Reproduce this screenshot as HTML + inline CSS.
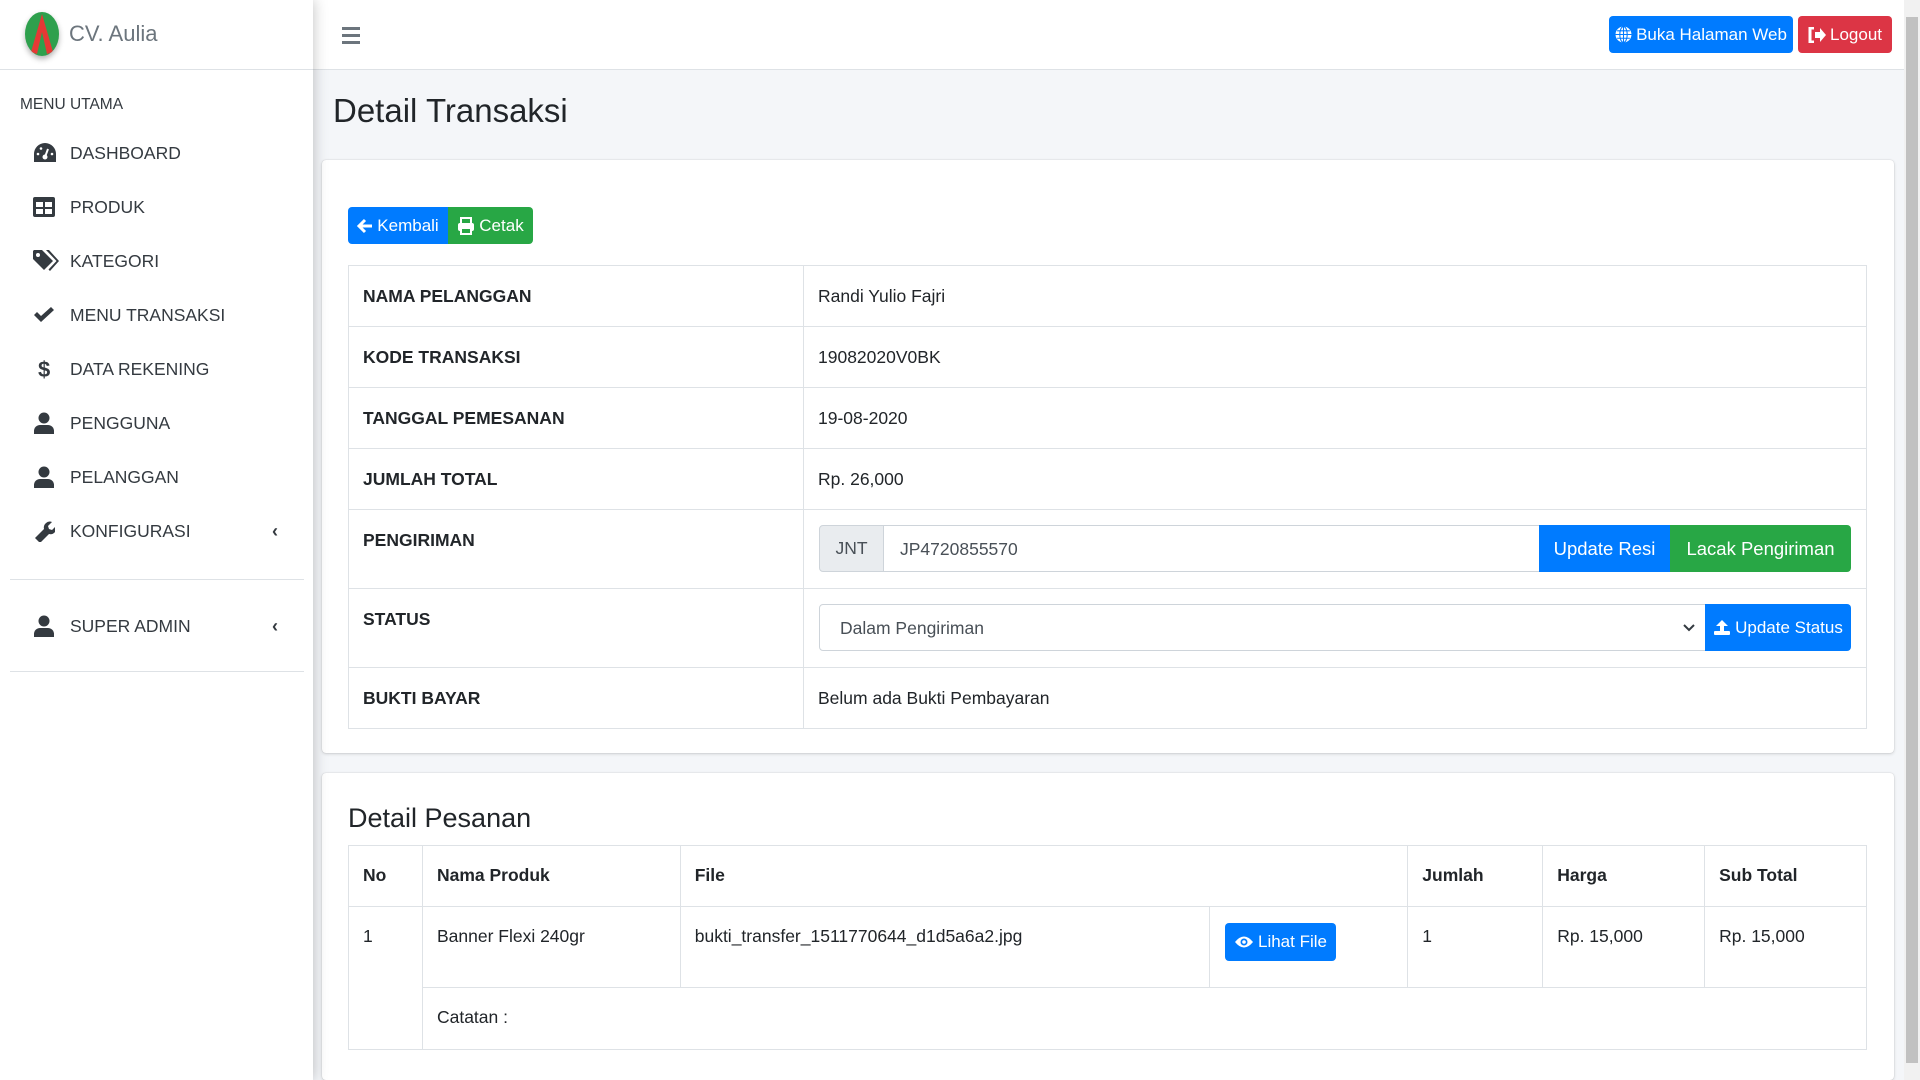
<!DOCTYPE html>
<html style="overflow:hidden;width:1920px;height:1080px"><head><meta charset="utf-8"><style>
*{box-sizing:border-box;margin:0;padding:0}
body{width:1920px;height:1080px;overflow:hidden;background:#f4f6f9;font-family:"Liberation Sans",sans-serif;color:#212529;position:relative}
.abs{position:absolute}
.sb{left:0;top:0;width:313px;height:1080px;background:#fff;box-shadow:0 0 14px rgba(0,0,0,.25);z-index:2}
.hdr{left:313px;top:0;width:1591px;height:70px;background:#fff;border-bottom:1px solid #dee2e6}
.mi{position:absolute;left:0;width:313px;font-size:17.5px;color:#343a40;display:flex;align-items:center}
.mi svg{position:absolute;left:33px}
.mi span{position:absolute;left:70px}
.chev{position:absolute;left:272px;font-weight:bold;font-size:18px}
.btn{position:absolute;color:#fff;font-size:17px;display:flex;align-items:center;justify-content:center;gap:4px;border-radius:4px}
.card{background:#fff;border-radius:4px;box-shadow:0 0 1px rgba(0,0,0,.2),0 1px 3px rgba(0,0,0,.15)}
table{border-collapse:collapse;position:absolute}
td,th{border:1px solid #dee2e6;font-size:17.5px;vertical-align:top;text-align:left}
.t1 td{padding:20px 14px 0}
.t1 td:first-child{font-weight:bold;width:455px}
.t2 th,.t2 td{padding:19px 14px 0}
</style></head><body>
<div class="abs sb">
 <div class="abs" style="left:25px;top:12px;width:34px;height:44px;border-radius:50%;background:#2ea04d;overflow:hidden;box-shadow:0 3px 6px rgba(0,0,0,.3)">
  <svg width="34" height="44"><path d="M17 2 L6 40 L12 42 L17 20 L22 42 L28 40 Z" fill="#e53935"/></svg>
 </div>
 <div class="abs" style="left:69px;top:21px;font-size:22px;color:#6c757d;font-weight:300">CV. Aulia</div>
 <div class="abs" style="left:0;top:69px;width:313px;border-top:1px solid #dee2e6"></div>
 <div class="abs" style="left:20px;top:96px;font-size:15.5px;color:#343a40">MENU UTAMA</div>
 <div class="mi" style="top:141px;height:24px"><svg width="24" height="22" viewBox="0 0 24 22"><path d="M12 1A11 11 0 0 0 1 12v8h22v-8A11 11 0 0 0 12 1z" fill="#343a40"/><circle cx="12" cy="15" r="2.5" fill="#fff"/><path d="M12 15 L15 7" stroke="#fff" stroke-width="2"/><circle cx="5" cy="12" r="1.3" fill="#fff"/><circle cx="8" cy="6.5" r="1.3" fill="#fff"/><circle cx="19" cy="12" r="1.3" fill="#fff"/></svg><span>DASHBOARD</span></div>
 <div class="mi" style="top:195px;height:24px"><svg width="22" height="20" viewBox="0 0 22 20"><rect x="0" y="0" width="22" height="20" rx="2" fill="#343a40"/><rect x="3" y="5" width="7" height="5" fill="#fff"/><rect x="12" y="5" width="7" height="5" fill="#fff"/><rect x="3" y="12" width="7" height="5" fill="#fff"/><rect x="12" y="12" width="7" height="5" fill="#fff"/></svg><span>PRODUK</span></div>
 <div class="mi" style="top:249px;height:24px"><svg width="26" height="24" viewBox="0 0 26 24"><path d="M0 2v8l11 11 9-9L9 1H1z" fill="#343a40"/><path d="M13 1h3l10 11-9 10-1.5-1.5 8-8.5z" fill="#343a40"/><circle cx="5" cy="6" r="2" fill="#fff"/></svg><span>KATEGORI</span></div>
 <div class="mi" style="top:303px;height:24px"><svg width="22" height="18" viewBox="0 0 22 18"><path d="M1 9l3-3 4 4L18 1l3 3L8 16z" fill="#343a40"/></svg><span>MENU TRANSAKSI</span></div>
 <div class="mi" style="top:357px;height:24px"><svg width="22" height="24" viewBox="0 0 22 24"><text x="5" y="20" font-size="22" font-weight="bold" fill="#343a40" font-family="Liberation Sans">$</text></svg><span>DATA REKENING</span></div>
 <div class="mi" style="top:411px;height:24px"><svg width="22" height="22" viewBox="0 0 22 22"><circle cx="11" cy="6" r="5.5" fill="#343a40"/><path d="M1 22v-3a6 6 0 0 1 6-6h8a6 6 0 0 1 6 6v3z" fill="#343a40"/></svg><span>PENGGUNA</span></div>
 <div class="mi" style="top:465px;height:24px"><svg width="22" height="22" viewBox="0 0 22 22"><circle cx="11" cy="6" r="5.5" fill="#343a40"/><path d="M1 22v-3a6 6 0 0 1 6-6h8a6 6 0 0 1 6 6v3z" fill="#343a40"/></svg><span>PELANGGAN</span></div>
 <div class="mi" style="top:519px;height:24px"><svg width="22" height="22" viewBox="0 0 22 22"><path d="M2 18l9-9a6 6 0 0 1 8-7l-4 4 1 3 3 1 4-4a6 6 0 0 1-7 8l-9 9z" fill="#343a40"/></svg><span>KONFIGURASI</span><b class="chev">‹</b></div>
 <div class="abs" style="left:10px;top:579px;width:294px;border-top:1px solid #dee2e6"></div>
 <div class="mi" style="top:614px;height:24px"><svg width="22" height="22" viewBox="0 0 22 22"><circle cx="11" cy="6" r="5.5" fill="#343a40"/><path d="M1 22v-3a6 6 0 0 1 6-6h8a6 6 0 0 1 6 6v3z" fill="#343a40"/></svg><span>SUPER ADMIN</span><b class="chev">‹</b></div>
 <div class="abs" style="left:10px;top:671px;width:294px;border-top:1px solid #dee2e6"></div>
</div>
<div class="abs hdr"></div>
<div class="abs" style="left:342px;top:27px;width:18px"><div style="height:2.5px;background:#6c757d;margin-bottom:4.5px"></div><div style="height:2.5px;background:#6c757d;margin-bottom:4.5px"></div><div style="height:2.5px;background:#6c757d"></div></div>
<div class="btn" style="left:1609px;top:16px;width:184px;height:37px;background:#007bff"><svg width="17" height="17" viewBox="0 0 16 16"><circle cx="8" cy="8" r="7.5" fill="#fff"/><path d="M8 0.5v15M0.5 8h15M2 4.5h12M2 11.5h12" stroke="#007bff" stroke-width="1"/><ellipse cx="8" cy="8" rx="3.5" ry="7.5" fill="none" stroke="#007bff" stroke-width="1"/></svg>Buka Halaman Web</div>
<div class="btn" style="left:1798px;top:16px;width:94px;height:37px;background:#dc3545"><svg width="18" height="16" viewBox="0 0 18 16"><path d="M6 1H2v14h4" stroke="#fff" stroke-width="3" fill="none"/><path d="M7 5h5V1l6 7-6 7v-4H7z" fill="#fff"/></svg>Logout</div>
<div class="abs" style="left:1904px;top:0;width:16px;height:1080px;background:#f1f1f1"><div style="margin:17px 2px;height:1046px;background:#c1c1c1"></div></div>
<div class="abs" style="left:333px;top:92px;font-size:33px;color:#212529">Detail Transaksi</div>
<div class="abs card" style="left:322px;top:160px;width:1572px;height:593px"></div>
<div class="btn" style="left:348px;top:207px;width:100px;height:37px;background:#007bff;border-radius:4px 0 0 4px"><svg width="16" height="16" viewBox="0 0 16 16"><path d="M8 2L2 8l6 6M2 8h13" stroke="#fff" stroke-width="3" fill="none"/></svg>Kembali</div>
<div class="btn" style="left:448px;top:207px;width:85px;height:37px;background:#28a745;border-radius:0 4px 4px 0"><svg width="18" height="18" viewBox="0 0 18 18"><rect x="4" y="1" width="10" height="6" fill="none" stroke="#fff" stroke-width="2"/><rect x="1" y="6" width="16" height="8" rx="2" fill="#fff"/><rect x="4" y="11" width="10" height="6" fill="#28a745" stroke="#fff" stroke-width="2"/></svg>Cetak</div>
<table class="t1" style="left:348px;top:265px;width:1519px">
<tr style="height:61px"><td>NAMA PELANGGAN</td><td>Randi Yulio Fajri</td></tr>
<tr style="height:61px"><td>KODE TRANSAKSI</td><td>19082020V0BK</td></tr>
<tr style="height:61px"><td>TANGGAL PEMESANAN</td><td>19-08-2020</td></tr>
<tr style="height:61px"><td>JUMLAH TOTAL</td><td>Rp. 26,000</td></tr>
<tr style="height:79px"><td>PENGIRIMAN</td><td></td></tr>
<tr style="height:79px"><td>STATUS</td><td></td></tr>
<tr style="height:61px"><td>BUKTI BAYAR</td><td>Belum ada Bukti Pembayaran</td></tr>
</table>
<div class="abs" style="left:819px;top:525px;width:65px;height:47px;background:#e9ecef;border:1px solid #ced4da;border-radius:4px 0 0 4px;font-size:17.5px;color:#495057;display:flex;align-items:center;justify-content:center">JNT</div>
<div class="abs" style="left:883px;top:525px;width:657px;height:47px;border:1px solid #ced4da;font-size:17.5px;color:#495057;padding:13px 16px">JP4720855570</div>
<div class="btn" style="left:1539px;top:525px;width:131px;height:47px;background:#007bff;border-radius:0;font-size:18.5px">Update Resi</div>
<div class="btn" style="left:1670px;top:525px;width:181px;height:47px;background:#28a745;border-radius:0 4px 4px 0;font-size:18.5px">Lacak Pengiriman</div>
<div class="abs" style="left:819px;top:604px;width:887px;height:47px;border:1px solid #ced4da;border-radius:4px 0 0 4px;font-size:17.5px;color:#495057;padding:13px 20px">Dalam Pengiriman<svg style="position:absolute;right:10px;top:19px" width="12" height="8" viewBox="0 0 12 8"><path d="M1 1l5 5 5-5" stroke="#343a40" stroke-width="2" fill="none"/></svg></div>
<div class="btn" style="left:1705px;top:604px;width:146px;height:47px;background:#007bff;border-radius:0 4px 4px 0"><svg width="18" height="17" viewBox="0 0 18 17"><path d="M9 1L3 7h4v5h4V7h4z" fill="#fff"/><rect x="1" y="12" width="16" height="4" rx="1" fill="#fff"/></svg>Update Status</div>
<div class="abs card" style="left:322px;top:773px;width:1572px;height:307px"></div>
<div class="abs" style="left:348px;top:803px;font-size:27px">Detail Pesanan</div>
<table class="t2" style="left:348px;top:845px;width:1519px">
<tr style="height:61px"><th style="width:74px">No</th><th style="width:258px">Nama Produk</th><th colspan="2">File</th><th style="width:135px">Jumlah</th><th style="width:162px">Harga</th><th style="width:162px">Sub Total</th></tr>
<tr style="height:81px"><td rowspan="2">1</td><td>Banner Flexi 240gr</td><td style="width:529px">bukti_transfer_1511770644_d1d5a6a2.jpg</td><td style="width:199px"></td><td>1</td><td>Rp. 15,000</td><td>Rp. 15,000</td></tr>
<tr style="height:62px"><td colspan="6">Catatan :</td></tr>
</table>
<div class="btn" style="left:1225px;top:923px;width:111px;height:38px;background:#007bff"><svg width="20" height="14" viewBox="0 0 20 14"><path d="M1 7Q10-4 19 7Q10 18 1 7z" fill="#fff"/><circle cx="10" cy="7" r="3.5" fill="#007bff"/><circle cx="10" cy="7" r="1.8" fill="#fff"/></svg>Lihat File</div>
</body></html>
